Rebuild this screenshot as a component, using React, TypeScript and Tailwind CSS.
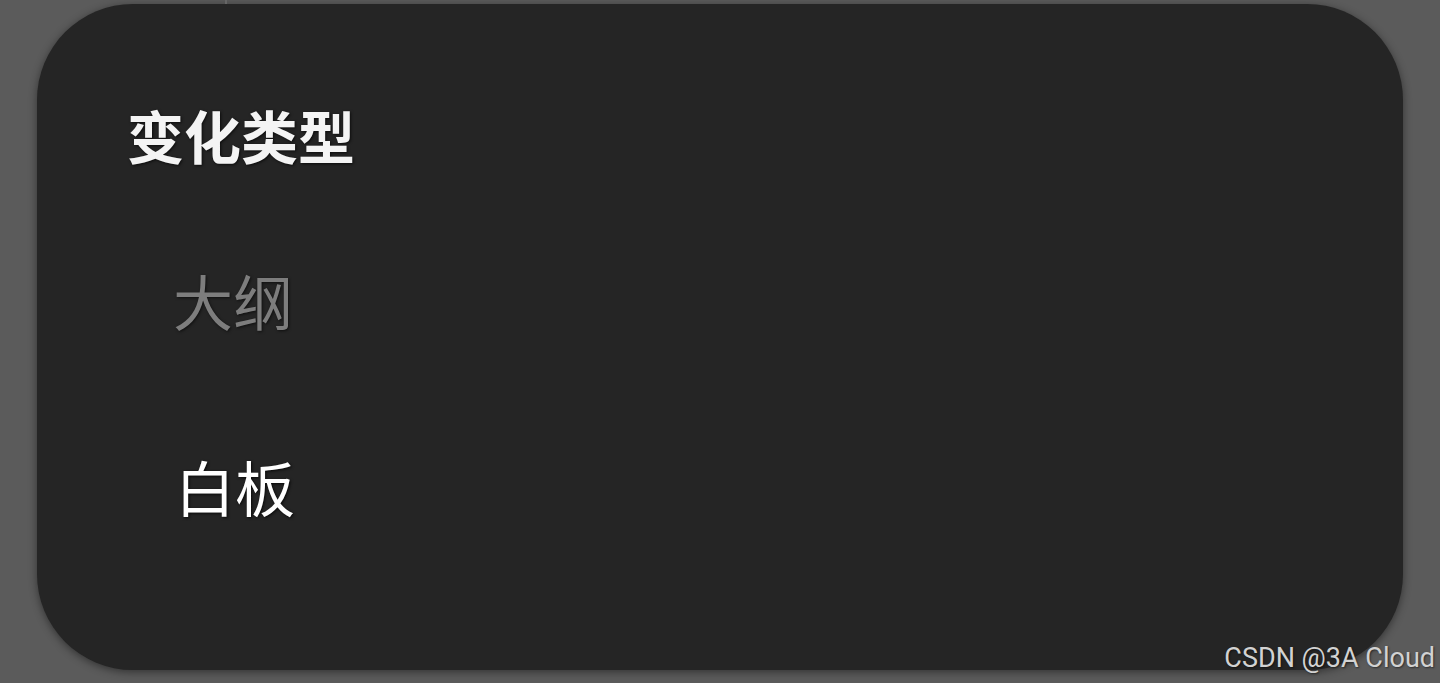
import React from "react";

export default function App() {
  const cjk = { fontFamily: '"Noto Sans CJK SC", "Noto Sans", sans-serif' };
  return (
    <div className="relative h-[683px] w-[1440px] overflow-hidden bg-[#5b5b5b]">
      <div className="absolute left-[225px] top-0 h-[4px] w-[2px] bg-[#666666]" />
      <div
        className="ml-[37px] mt-[4px] flex h-[666px] w-[1366px] flex-col rounded-[96px] bg-[#252525] pl-[90px] pt-[102px] shadow-[0_2px_8px_rgba(0,0,0,0.45)]"
        style={cjk}
      >
        <div className="text-[57px] font-bold leading-none text-[#f4f4f4] [text-shadow:1px_1px_3px_rgba(0,0,0,0.7)]">
          变化类型
        </div>
        <div className="ml-[46px] mt-[107px] text-[60px] leading-none text-[#7d7d7d] [text-shadow:1px_1px_3px_rgba(0,0,0,0.6)]">
          大纲
        </div>
        <div className="ml-[48px] mt-[126px] text-[60px] leading-none text-white [text-shadow:1px_1px_3px_rgba(0,0,0,0.8)]">
          白板
        </div>
      </div>
      <div
        className="absolute bottom-[11px] right-[5px] text-[27px] leading-none text-[#d2d2d2] [text-shadow:1px_1px_2px_rgba(0,0,0,0.5)]"
        style={{ fontFamily: 'Roboto, "Liberation Sans", sans-serif' }}
      >
        CSDN @3A Cloud
      </div>
    </div>
  );
}
